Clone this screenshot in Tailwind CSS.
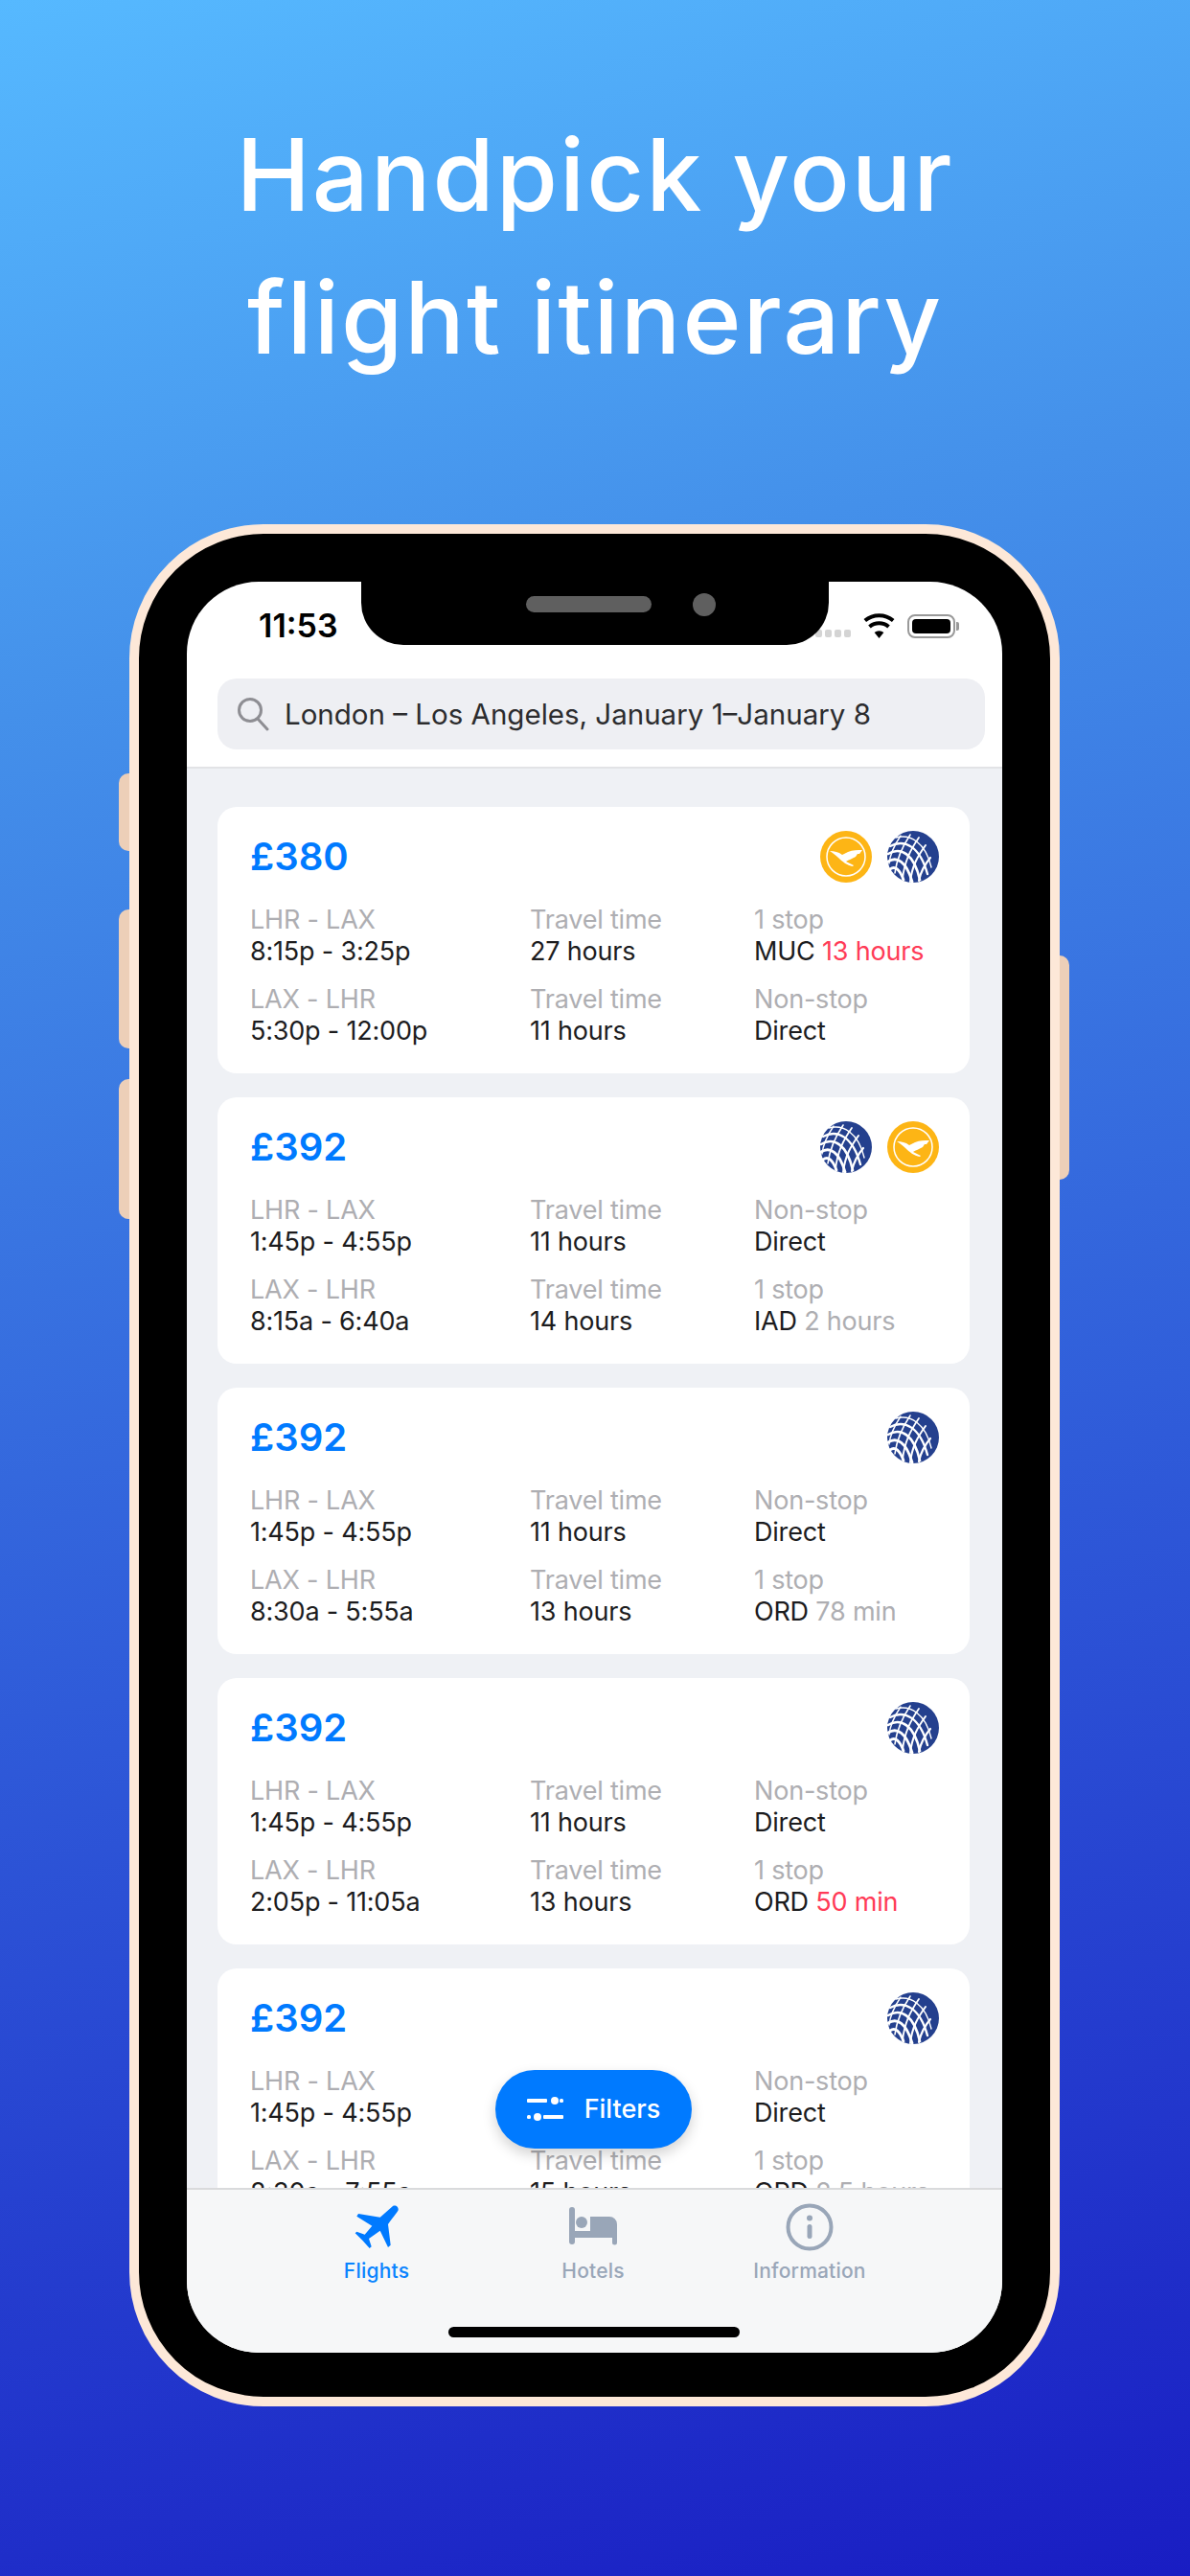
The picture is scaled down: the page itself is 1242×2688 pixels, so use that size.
<!DOCTYPE html>
<html>
<head>
  <meta charset="UTF-8" />
  <meta name="viewport" content="width=device-width, initial-scale=1.0" />
  <script src="https://cdn.jsdelivr.net/npm/@tailwindcss/browser@4"></script>
</head>
<body class="m-0">
<div class="w-[1242px] h-[2688px] overflow-hidden flex flex-col items-center bg-[linear-gradient(166deg,#56b9ff_0%,#4490ea_25%,#2f5bd9_60%,#191dc3_100%)] font-['Inter',sans-serif]">
  <h1 class="mt-[108px] text-center text-white text-[104px] leading-[149px] font-[450] tracking-[2px] font-['Inter',sans-serif]">Handpick your<br />flight itinerary</h1>

  <!-- phone -->
  <div class="relative mt-[141px] ml-[-1px] w-[971px] h-[1964px] shrink-0 rounded-[140px] border-[10px] border-[#fde8d8] bg-black px-[50px] pt-[50px] pb-[46px]">
    <div class="absolute left-[-21px] top-[250px] w-[11px] h-[81px] rounded-l-[10px] bg-[#edcfb8]"></div>
    <div class="absolute left-[-21px] top-[392px] w-[11px] h-[145px] rounded-l-[10px] bg-[#edcfb8]"></div>
    <div class="absolute left-[-21px] top-[569px] w-[11px] h-[146px] rounded-l-[10px] bg-[#edcfb8]"></div>
    <div class="absolute right-[-20px] top-[440px] w-[10px] h-[234px] rounded-r-[10px] bg-[#edcfb8]"></div>

    <div class="relative h-full rounded-[75px] overflow-hidden bg-white flex flex-col">
      <!-- notch -->
      <div class="absolute left-[182px] top-0 w-[488px] h-[66px] rounded-b-[44px] bg-black z-20">
        <div class="absolute left-[172px] top-[15px] w-[131px] h-[17px] rounded-full bg-[#5f5f5f]"></div>
        <div class="absolute left-[346px] top-[12px] w-[24px] h-[24px] rounded-full bg-[#5f5f5f]"></div>
      </div>

      <!-- status bar -->
      <div class="h-[101px] shrink-0 flex items-start justify-between pl-[75px] pr-[45px] pt-[26px]">
        <span class="text-[34px] leading-[40px] font-semibold text-black">11:53</span>
        <div class="flex items-center gap-[13px] pt-[5px]">
          <div class="flex items-end gap-[3px] h-[30px] pb-[3px]">
            <span class="w-[7px] h-[8px] rounded-[2px] bg-[#d4d4d4]"></span>
            <span class="w-[7px] h-[8px] rounded-[2px] bg-[#d4d4d4]"></span>
            <span class="w-[7px] h-[8px] rounded-[2px] bg-[#d4d4d4]"></span>
            <span class="w-[7px] h-[8px] rounded-[2px] bg-[#d4d4d4]"></span>
          </div>
          <svg width="33" height="26" viewBox="0 0 33 26"><path d="M16.5 26 11.600 20a7.600 7.600 0 0 1 9.800 0z" fill="#000"/><path d="M6.500 14a15.400 15.400 0 0 1 20 0M1.800 7.500a23 23 0 0 1 29.400 0" fill="none" stroke="#000" stroke-width="4"/></svg>
          <div class="flex items-center gap-[1px]">
            <div class="w-[50px] h-[25px] rounded-[8px] border-2 border-[#999] p-[3px]"><div class="w-full h-full rounded-[4px] bg-black"></div></div>
            <span class="w-[3px] h-[9px] rounded-r-[2px] bg-[#999]"></span>
          </div>
        </div>
      </div>

      <!-- search -->
      <div class="h-[94px] shrink-0 pl-[32px] pr-[18px] border-b-2 border-[#e2e3e6]">
        <div class="h-[74px] rounded-[20px] bg-[#eeeff3] flex items-center pl-[20px] gap-[14px]">
          <svg width="36" height="36" viewBox="0 0 36 36" fill="none" stroke="#8e8e93" stroke-width="3" stroke-linecap="round"><circle cx="14" cy="14" r="11.500"/><path d="M22 23l10 11"/></svg>
          <span class="text-[29.5px] leading-[36px] text-[#2c2c2e]">London – Los Angeles, January 1–January 8</span>
        </div>
      </div>

      <!-- flights -->
      <div id="flights" class="flex-1 min-h-0 overflow-hidden bg-[#eff1f5] pl-[32px] pr-[34px] pt-[40px] flex flex-col gap-[25px]"></div>

      <!-- tab bar -->
      <div class="h-[172px] shrink-0 border-t-2 border-[#d9dadc] bg-[#f6f7f8] relative">
        <div class="grid grid-cols-[226px_226px_226px] pl-[85px] pt-[14px]">
          <div class="flex flex-col items-center text-[#0a84ff]">
            <svg width="46" height="50" viewBox="0 -2 46 50" fill="#007aff"><path d="M45.700 5C45.200 7 42 10 35 20L37.700 41.700 35 44 26.700 26.700 15 35 17.700 43.300 15.700 45 8.300 36.700.7 29.300 2.300 27.700 10.700 30.700 18.300 21.700 2.300 11.700 4 9 26.700 12.700 40 1C43 -.5 46 2 45.700 5Z"/></svg>
            <span class="text-[21px] leading-[28px] font-medium mt-[7px] tracking-[0.2px]">Flights</span>
          </div>
          <div class="flex flex-col items-center text-[#99a6b8]">
            <svg width="50" height="50" viewBox="0 0 50 50" fill="#99a6b8"><rect x="0" y="4" width="6" height="39" rx="3"/><circle cx="13" cy="20" r="6"/><path d="M22 14H42A8 8 0 0 1 50 22V41A2.500 2.500 0 0 1 45 41V36H6V29H22Z"/></svg>
            <span class="text-[21px] leading-[28px] font-medium mt-[7px] tracking-[0.2px]">Hotels</span>
          </div>
          <div class="flex flex-col items-center text-[#99a6b8]">
            <svg width="50" height="50" viewBox="0 0 50 50" fill="none"><circle cx="25" cy="25" r="22.500" stroke="#99a6b8" stroke-width="4"/><circle cx="25" cy="15.500" r="3" fill="#99a6b8"/><rect x="22.500" y="22" width="5" height="15" rx="2.500" fill="#99a6b8"/></svg>
            <span class="text-[21px] leading-[28px] font-medium mt-[7px] tracking-[0.2px]">Information</span>
          </div>
        </div>
        <div class="absolute left-[273px] top-[143px] w-[304px] h-[11px] rounded-full bg-black"></div>
      </div>

      <!-- filters -->
      <button class="absolute left-[322px] top-[1553px] w-[205px] h-[82px] rounded-full bg-[#007aff] shadow-[0_6px_14px_rgba(0,0,0,0.18)] flex items-center justify-center gap-[22px] text-white z-10">
        <svg width="38" height="26" viewBox="0 0 38 26" fill="#fff"><rect x="0" y="2" width="21" height="4" rx="1"/><circle cx="29" cy="4" r="4"/><rect x="34" y="2" width="4" height="4" rx="1.500"/><rect x="0" y="19" width="4" height="4" rx="1.500"/><circle cx="11" cy="21" r="4"/><rect x="17" y="19" width="21" height="4" rx="1"/></svg>
        <span class="text-[27px] leading-[32px] font-medium">Filters</span>
      </button>
    </div>
  </div>
</div>

<script>
  const lufthansa = `
    <svg width="54" height="54" viewBox="0 0 54 54">
      <circle cx="27" cy="27" r="27" fill="#fdb515"/>
      <circle cx="27" cy="27" r="20" fill="none" stroke="#fff" stroke-width="1.500"/>
      <path d="M10 21c5 0 9 1 13 4l6-3c5-2 10-2 15-2l-3 4-2 0-2 3-6 3c-2 1-3 1-4 2l8 4-1 1c-6-1-11-5-15-9c-3-3-6-5-9-7z" fill="#fff"/>
    </svg>`;

  const united = `
    <svg width="54" height="54" viewBox="0 0 54 54">
      <circle cx="27" cy="27" r="27" fill="#24408e"/>
      <g fill="none" stroke="#fff" stroke-linecap="round">
        <path d="M3 16C18 8 34 16 42 45" stroke-width="2.400"/>
        <path d="M1 24C14 16 28 24 34 51" stroke-width="2.600"/>
        <path d="M1 32C10 26 20 32 26 53" stroke-width="2.800"/>
        <path d="M3 40C8 36 13 40 17 51" stroke-width="2.800"/>
        <path d="M9 7C24 3 40 12 46 38" stroke-width="1.400"/>
        <path d="M14 5C8 14 3 24 2 34" stroke-width="1.400"/>
        <path d="M24 4C16 16 10 28 8 44" stroke-width="1.600"/>
        <path d="M33 7C24 20 18 32 16 50" stroke-width="1.800"/>
        <path d="M40 15C32 26 26 36 24 53" stroke-width="2"/>
        <path d="M45 28C40 34 35 42 33 52" stroke-width="2.200"/>
      </g>
    </svg>`;

  const flights = [
    {
      price: '£380', logos: [lufthansa, united],
      rows: [
        { route: 'LHR - LAX', times: '8:15p - 3:25p', hours: '27 hours', stops: '1 stop', via: 'MUC', layover: '13 hours', tight: true },
        { route: 'LAX - LHR', times: '5:30p - 12:00p', hours: '11 hours', stops: 'Non-stop', via: 'Direct' }
      ]
    },
    {
      price: '£392', logos: [united, lufthansa],
      rows: [
        { route: 'LHR - LAX', times: '1:45p - 4:55p', hours: '11 hours', stops: 'Non-stop', via: 'Direct' },
        { route: 'LAX - LHR', times: '8:15a - 6:40a', hours: '14 hours', stops: '1 stop', via: 'IAD', layover: '2 hours' }
      ]
    },
    {
      price: '£392', logos: [united],
      rows: [
        { route: 'LHR - LAX', times: '1:45p - 4:55p', hours: '11 hours', stops: 'Non-stop', via: 'Direct' },
        { route: 'LAX - LHR', times: '8:30a - 5:55a', hours: '13 hours', stops: '1 stop', via: 'ORD', layover: '78 min' }
      ]
    },
    {
      price: '£392', logos: [united],
      rows: [
        { route: 'LHR - LAX', times: '1:45p - 4:55p', hours: '11 hours', stops: 'Non-stop', via: 'Direct' },
        { route: 'LAX - LHR', times: '2:05p - 11:05a', hours: '13 hours', stops: '1 stop', via: 'ORD', layover: '50 min', tight: true }
      ]
    },
    {
      price: '£392', logos: [united],
      rows: [
        { route: 'LHR - LAX', times: '1:45p - 4:55p', hours: '11 hours', stops: 'Non-stop', via: 'Direct' },
        { route: 'LAX - LHR', times: '8:30a - 7:55a', hours: '15 hours', stops: '1 stop', via: 'ORD', layover: '2.5 hours' }
      ]
    }
  ];

  function renderRow(row) {
    const layover = row.layover
      ? `<span class="${row.tight ? 'text-[#ff3b57]' : 'text-[#aeaeb2]'}">${row.layover}</span>`
      : '';
    return `
      <div class="grid grid-cols-[292px_234px_1fr] text-[27px] leading-[33px] tracking-[-0.2px]">
        <div class="text-[#aeaeb2]">${row.route}</div>
        <div class="text-[#aeaeb2]">Travel time</div>
        <div class="text-[#aeaeb2]">${row.stops}</div>
        <div class="text-[#1c1c1e]">${row.times}</div>
        <div class="text-[#1c1c1e]">${row.hours}</div>
        <div class="text-[#1c1c1e]">${row.via} ${layover}</div>
      </div>`;
  }

  document.getElementById('flights').innerHTML = flights.map(f => `
    <div class="shrink-0 h-[278px] rounded-[20px] bg-white pl-[34px] pr-[32px] pt-[25px]">
      <div class="flex items-center justify-between h-[54px]">
        <span class="text-[40px] leading-[54px] font-semibold text-[#007aff]">${f.price}</span>
        <div class="flex gap-[16px]">${f.logos.join('')}</div>
      </div>
      <div class="mt-[22px] flex flex-col gap-[17px]">${f.rows.map(renderRow).join('')}</div>
    </div>
  `).join('');
</script>
</body>
</html>
